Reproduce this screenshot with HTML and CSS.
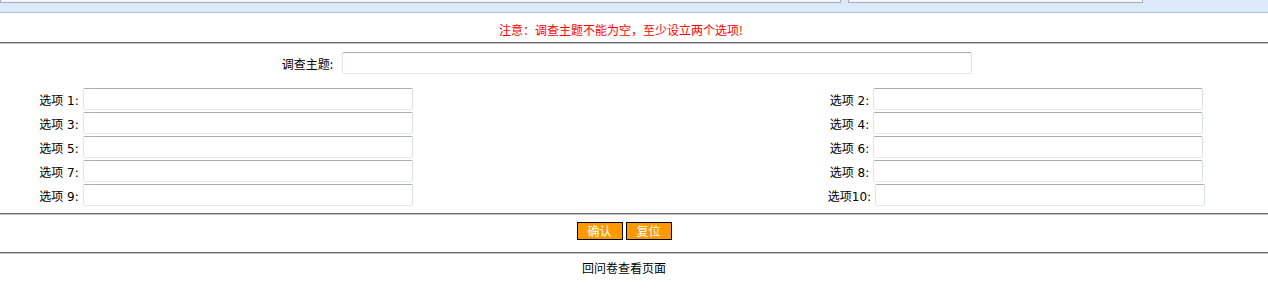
FILE: index.html
```html
<!DOCTYPE html>
<html lang="zh-CN">
<head>
    <meta charset="UTF-8">
    <title>添加调查</title>
    <link rel="stylesheet" href="styles.css">
</head>
<body>
    <div class="topbar">
        <span class="top-box wide"></span>
        <span class="top-box narrow"></span>
    </div>

    <div class="notice band">注意：调查主题不能为空，至少设立两个选项!</div>
    <hr class="rule">

    <form id="vote-form">
        <div class="subject-row band">
            <label for="subject">调查主题:</label>
            <input type="text" id="subject" class="field subject-field">
        </div>

        <div class="options band">
            <div class="opt left"><label>选项 1:</label><input type="text" class="field"></div>
            <div class="opt right"><label>选项 2:</label><input type="text" class="field"></div>
            <div class="opt left"><label>选项 3:</label><input type="text" class="field"></div>
            <div class="opt right"><label>选项 4:</label><input type="text" class="field"></div>
            <div class="opt left"><label>选项 5:</label><input type="text" class="field"></div>
            <div class="opt right"><label>选项 6:</label><input type="text" class="field"></div>
            <div class="opt left"><label>选项 7:</label><input type="text" class="field"></div>
            <div class="opt right"><label>选项 8:</label><input type="text" class="field"></div>
            <div class="opt left"><label>选项 9:</label><input type="text" class="field"></div>
            <div class="opt right"><label>选项10:</label><input type="text" class="field"></div>
        </div>

        <hr class="rule">

        <div class="buttons band">
            <button type="submit" class="btn">确认</button>
            <button type="reset" class="btn">复位</button>
        </div>
    </form>

    <hr class="rule">
    <div class="back band"><a href="#">回问卷查看页面</a></div>
</body>
</html>
```

FILE: styles.css
```css
body {
    margin: 0;
    padding: 0;
    background-color: #fff;
    color: #000;
    font-family: "DejaVu Sans", "Noto Sans CJK SC", sans-serif;
    font-size: 12px;
}
.topbar {
    height: 12px;
    background-color: #dce9f9;
    border-bottom: 1px solid #a7bcd5;
    display: flex;
    gap: 7px;
}
.top-box {
    display: block;
    height: 2px;
    background-color: #f3f7fc;
    border: 1px solid #a3afbf;
    border-top: none;
}
.top-box.wide {
    width: 839px;
}
.top-box.narrow {
    width: 293px;
}
.band {
    width: 1248px;
}
.notice {
    color: #ff0000;
    text-align: center;
    font-family: "Noto Sans CJK SC", sans-serif;
    line-height: 16px;
    padding: 9px 0 4px;
    width: 1242px;
}
.rule {
    margin: 0;
    height: 0;
    border: none;
    border-top: 1px solid #6a6a6a;
    border-bottom: 1px solid #c4c4c4;
}
.subject-row {
    display: grid;
    grid-template-columns: 333px 630px;
    column-gap: 9px;
    align-items: center;
    margin-top: 8px;
}
.subject-row label {
    text-align: right;
    font-family: "Noto Sans CJK SC", sans-serif;
}
.field {
    box-sizing: border-box;
    width: 330px;
    height: 22px;
    margin: 0;
    padding: 2px;
    border: 1px solid;
    border-color: #abadb3 #dbdfe6 #e3e9ef #e2e3ea;
    border-radius: 2px;
    background-color: #fff;
    font-size: 12px;
}
.subject-field {
    width: 630px;
}
.options {
    display: grid;
    grid-template-columns: 452px 1fr 463px;
    row-gap: 2px;
    margin-top: 14px;
    margin-bottom: 7px;
}
.opt {
    display: flex;
    justify-content: center;
    align-items: center;
    gap: 4px;
}
.opt.left {
    grid-column: 1;
}
.opt.right {
    grid-column: 3;
}
.opt label {
    white-space: pre;
}
.buttons {
    display: flex;
    justify-content: center;
    gap: 3px;
    padding: 7px 0 12px;
}
.btn {
    width: 46px;
    height: 18px;
    padding: 0;
    border: 1px solid #000;
    background-color: #ff9900;
    color: #fff;
    font-family: "Noto Sans CJK SC", sans-serif;
    font-size: 12px;
    line-height: 16px;
    cursor: pointer;
}
.back {
    text-align: center;
    padding-top: 6px;
    line-height: 16px;
}
.back a {
    color: #000;
    text-decoration: none;
    font-family: "Noto Sans CJK SC", sans-serif;
}
```
